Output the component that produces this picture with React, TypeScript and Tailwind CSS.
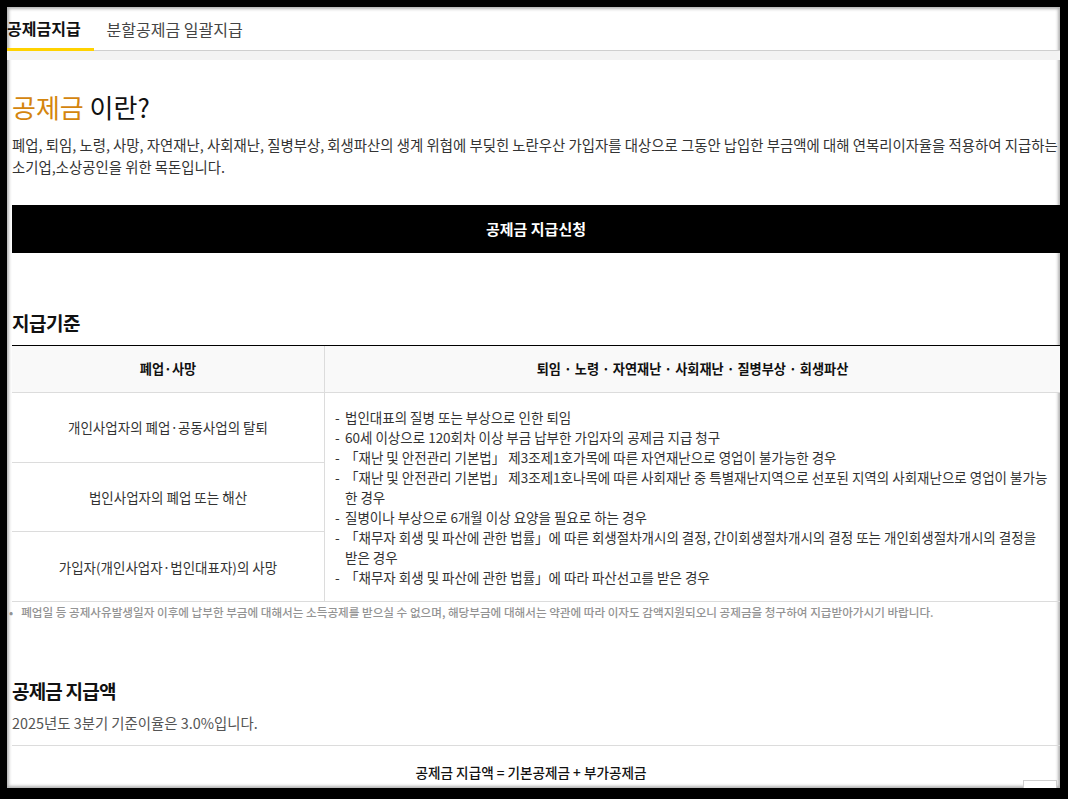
import { Fragment } from 'react'

const leftRows = [
  '개인사업자의 폐업·공동사업의 탈퇴',
  '법인사업자의 폐업 또는 해산',
  '가입자(개인사업자·법인대표자)의 사망',
]

// each item can wrap onto a second line (hanging indent)
const rightItems: string[][] = [
  ['법인대표의 질병 또는 부상으로 인한 퇴임'],
  ['60세 이상으로 120회차 이상 부금 납부한 가입자의 공제금 지급 청구'],
  ['「재난 및 안전관리 기본법」 제3조제1호가목에 따른 자연재난으로 영업이 불가능한 경우'],
  ['「재난 및 안전관리 기본법」 제3조제1호나목에 따른 사회재난 중 특별재난지역으로 선포된 지역의 사회재난으로 영업이 불가능', '한 경우'],
  ['질병이나 부상으로 6개월 이상 요양을 필요로 하는 경우'],
  ['「채무자 회생 및 파산에 관한 법률」에 따른 회생절차개시의 결정, 간이회생절차개시의 결정 또는 개인회생절차개시의 결정을', '받은 경우'],
  ['「채무자 회생 및 파산에 관한 법률」에 따라 파산선고를 받은 경우'],
]

export default function App() {
  return (
    <div className="h-[799px] w-[1068px] bg-black pt-[7px] pl-[7px] pr-[8px] pb-[11px] font-['Noto_Sans_CJK_KR','Noto_Sans',sans-serif] text-[#222]">
      <div className="relative h-full w-full overflow-hidden bg-white shadow-[inset_0_0_3px_2px_rgba(170,170,170,0.9)]">
        {/* tabs */}
        <div className="flex h-[44px] items-stretch border-b border-[#cfcfcf]">
          <div className="-mb-px flex items-center border-b-[3px] border-[#ffd200] pr-[13px] text-[16px] font-bold text-[#111]">
            공제금지급
          </div>
          <div className="flex items-center px-[13px] text-[16px] text-[#444]">분할공제금 일괄지급</div>
        </div>
        <div className="h-[9px] bg-[#f3f3f3]" />

        <div className="pl-[5px]">
          <h2 className="mt-[30px] text-[26px] leading-[34px] text-[#111]">
            <span className="text-[#d4850e]">공제금</span> 이란?
          </h2>
          <p className="mt-[10px] whitespace-nowrap text-[14.4px] leading-[22px] text-[#333]">
            폐업, 퇴임, 노령, 사망, 자연재난, 사회재난, 질병부상, 회생파산의 생계 위협에 부딪힌 노란우산 가입자를 대상으로 그동안 납입한 부금액에 대해 연복리이자율을 적용하여 지급하는
            <br />
            소기업,소상공인을 위한 목돈입니다.
          </p>

          <button className="mt-[27px] flex h-[48px] w-full items-center justify-center bg-black text-[15px] font-bold text-white">
            공제금 지급신청
          </button>

          <h3 className="mt-[56px] text-[19px] font-bold leading-[28px] tracking-[-0.5px] text-[#111]">지급기준</h3>

          <div className="mt-[8px] border-t border-black">
            <div className="grid grid-cols-[313px_1fr]">
              <div className="flex h-[47px] items-center justify-center border-b border-r border-[#dcdcdc] bg-[#f9f9f9] text-[13.2px] font-bold text-[#111]">
                폐업·사망
              </div>
              <div className="flex h-[47px] items-center justify-center border-b border-[#dcdcdc] bg-[#f9f9f9] text-[13.2px] font-bold text-[#111]">
                퇴임 · 노령 · 자연재난 · 사회재난 · 질병부상 · 회생파산
              </div>
              <div className="flex flex-col border-r border-b border-[#dcdcdc]">
                {leftRows.map((r, i) => (
                  <div
                    key={r}
                    className={`flex flex-1 items-center justify-center text-[13.5px] text-[#333] ${i < 2 ? 'border-b border-[#dcdcdc]' : ''}`}
                  >
                    {r}
                  </div>
                ))}
              </div>
              <div className="flex flex-col justify-center border-b border-[#dcdcdc] py-[14px] pl-[10px] text-[13.5px] leading-[20px] text-[#333]">
                {rightItems.map((lines, i) => (
                  <Fragment key={i}>
                    <div className="flex whitespace-nowrap">
                      <span className="w-[10px] shrink-0">-</span>
                      <span>{lines[0]}</span>
                    </div>
                    {lines[1] && <div className="whitespace-nowrap pl-[10px]">{lines[1]}</div>}
                  </Fragment>
                ))}
              </div>
            </div>
          </div>

          <p className="-ml-[3px] mt-[2px] whitespace-nowrap text-[11.6px] font-medium leading-[16px] text-[#939393]">
            <span className="mr-[8px]">•</span>폐업일 등 공제사유발생일자 이후에 납부한 부금에 대해서는 소득공제를 받으실 수 없으며, 해당부금에 대해서는 약관에 따라 이자도 감액지원되오니 공제금을 청구하여 지급받아가시기 바랍니다.
          </p>

          <h3 className="mt-[57px] text-[19px] font-bold leading-[28px] tracking-[-0.8px] text-[#111]">공제금 지급액</h3>
          <p className="mt-[7px] text-[14.4px] leading-[22px] text-[#555]">2025년도 3분기 기준이율은 3.0%입니다.</p>

          <div className="mt-[11px] border-t border-[#dcdcdc] pr-[10px] pt-[15px] text-center text-[13.6px] font-medium leading-[22px] text-[#111]">
            공제금 지급액 = 기본공제금 + 부가공제금
          </div>
        </div>

        <div className="absolute bottom-[-4px] right-[3px] h-[12px] w-[34px] border border-[#cfcfcf] bg-white" />
      </div>
    </div>
  )
}
